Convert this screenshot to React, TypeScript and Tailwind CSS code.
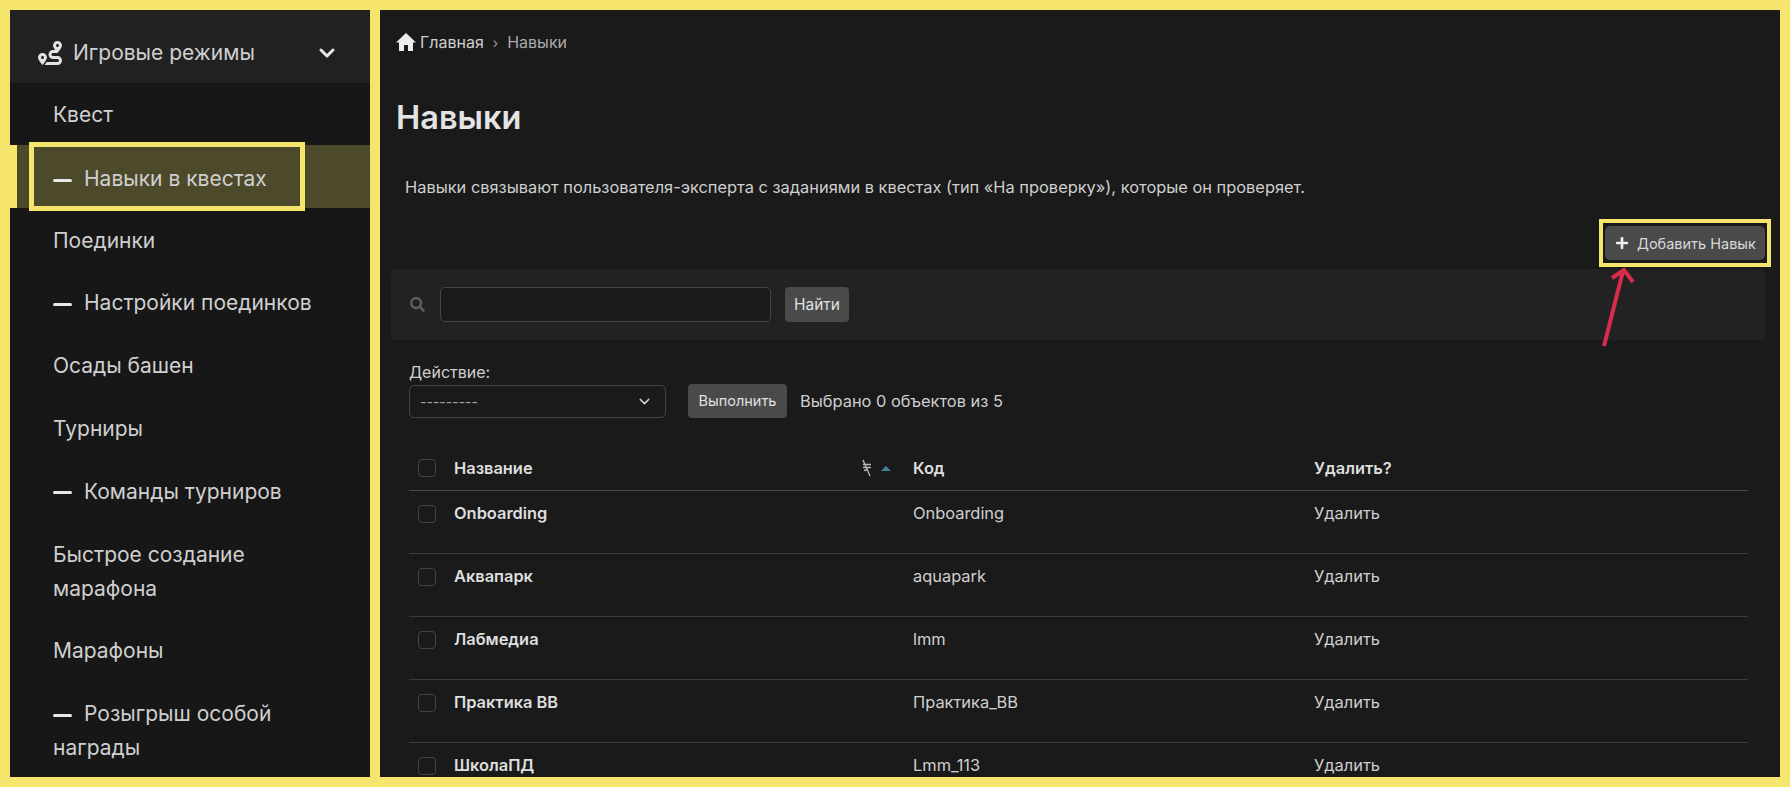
import { ChevronDown } from 'lucide-react';
import { FaPlus, FaRoute, FaSearch } from 'react-icons/fa';

interface MenuItem {
  label: string;
  dash?: boolean;
  active?: boolean;
}

const menu: MenuItem[] = [
  { label: 'Квест' },
  { label: 'Навыки в квестах', dash: true, active: true },
  { label: 'Поединки' },
  { label: 'Настройки поединков', dash: true },
  { label: 'Осады башен' },
  { label: 'Турниры' },
  { label: 'Команды турниров', dash: true },
  { label: 'Быстрое создание марафона' },
  { label: 'Марафоны' },
  { label: 'Розыгрыш особой награды', dash: true },
];

const rows = [
  { name: 'Onboarding', code: 'Onboarding' },
  { name: 'Аквапарк', code: 'aquapark' },
  { name: 'Лабмедиа', code: 'lmm' },
  { name: 'Практика ВВ', code: 'Практика_BB' },
  { name: 'ШколаПД', code: 'Lmm_113' },
];

const Checkbox = () => <span className="block h-[18px] w-[18px] rounded-[4px] border border-[#444444]" />;

const Sidebar = () => (
  <aside className="w-[360px] shrink-0 overflow-hidden bg-[#171717] text-[21px] leading-[34px] text-[#cfcfcf]">
    <div className="flex h-[73px] items-center bg-[#212121] pl-[28px] pr-[31px] pt-[12px]">
      <FaRoute className="h-[24px] w-[24px] text-[#e2e2e2]" />
      <span className="ml-[11px] flex-1">Игровые режимы</span>
      <ChevronDown className="h-[24px] w-[24px] text-[#e8e8e8]" strokeWidth={3} />
    </div>
    {menu.map((item, i) =>
      item.active ? (
        <div key={item.label} className="relative h-[63px] border-l-[7px] border-[#f6e56c] bg-[#4d4a2b] pt-[17px] pl-[36px]">
          <span className="mr-[12px] inline-block h-[3px] w-[19px] rounded-full bg-[#e8e8e8] align-middle" />
          {item.label}
          <div className="absolute left-[12px] top-[-3px] h-[69px] w-[276px] border-[5px] border-[#f6e56c]" />
        </div>
      ) : (
        <div key={item.label} className={`pl-[43px] pr-[40px] ${i === 0 ? 'h-[62px] pt-[15px]' : 'pt-[15.6px] pb-[13.2px]'}`}>
          {item.dash && <span className="mr-[12px] inline-block h-[3px] w-[19px] rounded-full bg-[#e8e8e8] align-middle" />}
          {item.label}
        </div>
      ),
    )}
  </aside>
);

const Main = () => (
  <main className="relative min-w-0 flex-1 overflow-hidden bg-[#1a1a1a] pl-[11px] pr-[15px] text-[16.4px] text-[#cfcfcf]">
    <div className="mt-[22px] flex h-[20px] items-center pl-[5px] text-[16px]">
      <svg viewBox="0 0 20 18" className="mr-[4px] h-[18px] w-[20px] text-[#ececec]" fill="currentColor">
        <path d="M10 0L0 9.5h3V18h5v-6h4v6h5V9.5h3z" />
      </svg>
      <span>Главная</span>
      <span className="mx-[9px] text-[14px] text-[#999999]">›</span>
      <span className="text-[#aaaaaa]">Навыки</span>
    </div>
    <h1 className="mt-[46px] pl-[5px] text-[32.5px] font-semibold leading-[40px] text-[#e4e4e4]">Навыки</h1>
    <p className="mt-[39px] pl-[14px] leading-[20px]">
      Навыки связывают пользователя-эксперта с заданиями в квестах (тип «На проверку»), которые он проверяет.
    </p>
    <div className="mt-[29px] flex justify-end">
      <div className="relative flex h-[34px] w-[160px] items-center rounded-[5px] bg-[#4a4a4a] pl-[10px] text-[#d8d8d8]">
        <FaPlus className="mr-[8px] h-[14px] w-[14px] text-[#f0f0f0]" />
        <span className="pt-[1px] text-[14.5px]">Добавить Навык</span>
        <div className="absolute -inset-x-[6px] -inset-y-[7px] border-[4px] border-[#f6e56c]" />
      </div>
    </div>
    <section className="mt-[9px] rounded-t-[6px]">
      <div className="flex h-[71px] items-center rounded-t-[6px] bg-[#222222] pl-[19px]">
        <FaSearch className="h-[15px] w-[15px] text-[#5f5f5f]" />
        <div className="ml-[15px] h-[35px] w-[331px] rounded-[5px] border border-[#444444] bg-[#1a1a1a]" />
        <div className="ml-[14px] flex h-[35px] w-[64px] items-center justify-center rounded-[4px] bg-[#4a4a4a] text-[15.5px] text-[#e0e0e0]">Найти</div>
      </div>
      <div className="pl-[18px] pr-[17px]">
        <div className="mt-[22px] text-[16px] leading-[20px]">Действие:</div>
        <div className="mt-[2px] flex items-center">
          <div className="flex h-[33px] w-[257px] items-center justify-between rounded-[5px] border border-[#444444] pl-[10px] pr-[12px] text-[14px] text-[#a5a5a5]">
            <span>---------</span>
            <ChevronDown className="h-[17px] w-[17px] text-[#d0d0d0]" strokeWidth={2} />
          </div>
          <div className="ml-[22px] flex h-[34px] w-[99px] items-center justify-center rounded-[4px] bg-[#4a4a4a] text-[14.5px] text-[#e0e0e0]">Выполнить</div>
          <span className="ml-[13px] text-[16.4px]">Выбрано 0 объектов из 5</span>
        </div>
        <div className="mt-[40px] grid h-[33px] grid-cols-[45px_459px_401px_1fr] items-start border-b border-[#4a4a4a] font-semibold leading-[20px] text-[#dedede]">
          <div className="pl-[9px] pt-[1px]"><Checkbox /></div>
          <div className="flex items-center justify-between pr-[22px]">
            <span>Название</span>
            <span className="flex items-center gap-[9px]">
              <svg viewBox="0 0 10 18" className="h-[18px] w-[10px] text-[#b5b5b5]" fill="none" stroke="currentColor">
                <path d="M1 1l7 16M1 5.5h8M1 8.5h8M2 11.5l4-1" strokeWidth="1.4" />
              </svg>
              <span className="h-0 w-0 border-x-[5px] border-b-[5px] border-x-transparent border-b-[#47839f]" />
            </span>
          </div>
          <div>Код</div>
          <div>Удалить?</div>
        </div>
        {rows.map((row) => (
          <div key={row.name} className="grid h-[63px] grid-cols-[45px_459px_401px_1fr] border-b border-[#3c3c3c] pt-[14px] leading-[16px]">
            <div className="pl-[9px]"><Checkbox /></div>
            <div className="font-semibold text-[#dedede]">{row.name}</div>
            <div>{row.code}</div>
            <div>Удалить</div>
          </div>
        ))}
      </div>
    </section>
    <svg viewBox="0 0 40 90" className="absolute left-[1216px] top-[254px] h-[90px] w-[40px]" fill="none" stroke="#d92c4c" strokeWidth="4">
      <path d="M8 82L27 7M16 14l12-8l9 12" />
    </svg>
  </main>
);

export default function App() {
  return (
    <div className="flex h-[787px] w-[1790px] gap-[10px] overflow-hidden bg-[#f6e56c] p-[10px] font-['Inter',sans-serif]">
      <Sidebar />
      <Main />
    </div>
  );
}
